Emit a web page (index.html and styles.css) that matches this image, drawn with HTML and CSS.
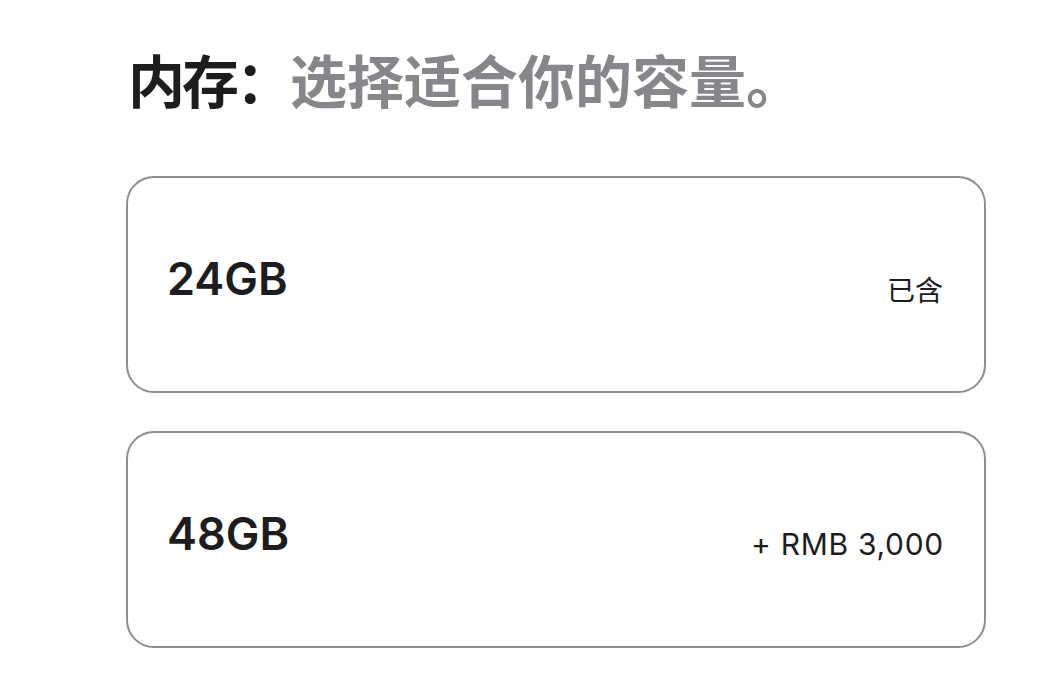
FILE: index.html
```html
<!DOCTYPE html>
<html lang="zh-CN">
<head>
<meta charset="utf-8">
<link rel="stylesheet" href="styles.css">
</head>
<body>
<main class="page">
  <h2 class="title"><span class="title-strong">内存：</span><span class="title-muted">选择适合你的容量。</span></h2>
  <div class="options">
    <div class="option">
      <span class="option-name">24GB</span>
      <span class="option-price">已含</span>
    </div>
    <div class="option">
      <span class="option-name">48GB</span>
      <span class="option-price option-price-amount">+ RMB 3,000</span>
    </div>
  </div>
</main>
</body>
</html>
```
FILE: styles.css
```css
html, body {
  margin: 0;
  padding: 0;
  background: #ffffff;
}
body {
  font-family: Inter, "Liberation Sans", "Noto Sans CJK SC", sans-serif;
  color: #1d1d1f;
}
.page {
  padding: 42px 0 0 126px;
}
.title {
  margin: 0 0 0 2px;
  font-family: "Noto Sans CJK SC", sans-serif;
  font-size: 57px;
  line-height: 72px;
  font-weight: 700;
}
.title-strong {
  color: #1d1d1f;
  letter-spacing: -3px;
}
.title-muted { color: #86868b; }
.options {
  margin-top: 62px;
  display: flex;
  flex-direction: column;
  gap: 38px;
}
.option {
  box-sizing: border-box;
  width: 860px;
  height: 217px;
  border: 2px solid #8e8e8e;
  border-radius: 28px;
  display: flex;
  justify-content: space-between;
  align-items: center;
  padding: 0 41px 0 39px;
}
.option-name {
  font-size: 45px;
  font-weight: 600;
  padding-bottom: 12px;
}
.option-price {
  font-size: 28px;
  font-weight: 400;
  padding-top: 8px;
  font-family: Inter, "Noto Sans CJK SC", sans-serif;
}
.option-price-amount {
  font-size: 30px;
  letter-spacing: 0.7px;
  margin-right: -1px;
}
```
